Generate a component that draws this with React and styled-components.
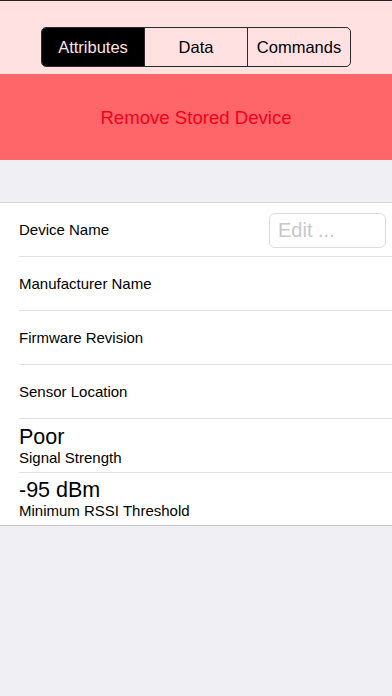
import React from "react";
import styled, { createGlobalStyle } from "styled-components";

const Global = createGlobalStyle`
  html, body { margin: 0; padding: 0; }
  body {
    background: #efeff4;
    font-family: "Liberation Sans", Arial, sans-serif;
    -webkit-font-smoothing: antialiased;
  }
  #root { min-height: 696px; }
`;

const Page = styled.div`
  width: 392px;
  min-height: 696px;
  background: #efeff4;
  display: flex;
  flex-direction: column;
`;

const Header = styled.div`
  height: 74px;
  box-sizing: border-box;
  background: #ffe1e1;
  border-top: 1px solid #222;
  display: flex;
  align-items: flex-start;
  justify-content: center;
  padding-top: 26px;
`;

const Segmented = styled.div`
  display: flex;
  width: 310px;
  height: 40px;
  box-sizing: border-box;
  border: 1px solid #2b2b2b;
  border-radius: 5px;
  overflow: hidden;
`;

const Segment = styled.div`
  flex: 1;
  display: flex;
  align-items: center;
  justify-content: center;
  padding-top: 1px;
  font-size: 16.5px;
  color: ${(p) => (p.$active ? "#ffe1e1" : "#000")};
  background: ${(p) => (p.$active ? "#000" : "transparent")};
  & + & { border-left: 1px solid #2b2b2b; }
`;

const RemoveBand = styled.div`
  height: 86px;
  background: #ff6669;
  display: flex;
  align-items: center;
  justify-content: center;
  padding-top: 1px;
  box-sizing: border-box;
  color: #f5001a;
  font-size: 18.6px;
`;

const Spacer = styled.div`
  height: 42px;
`;

const List = styled.div`
  background: #fff;
  border-top: 1px solid #d6d6da;
  border-bottom: 1px solid #c8c7cc;
`;

const Row = styled.div`
  height: 54px;
  box-sizing: border-box;
  margin-left: 19px;
  padding-right: 6px;
  display: flex;
  align-items: center;
  justify-content: space-between;
  &:not(:last-child) { border-bottom: 1px solid #e0e0e4; }
  &:last-child { height: 52px; }
`;

const Label = styled.div`
  font-size: 15px;
  color: #000;
`;

const Stack = styled.div`
  display: flex;
  flex-direction: column;
`;

const Value = styled.div`
  font-size: 21.5px;
  line-height: 24px;
  color: #000;
`;

const SubLabel = styled.div`
  font-size: 15px;
  line-height: 18px;
  color: #000;
`;

const EditField = styled.input`
  width: 117px;
  height: 35px;
  box-sizing: border-box;
  border: 1px solid #dcdcdc;
  border-radius: 6px;
  padding: 0 8px;
  font-family: inherit;
  font-size: 20px;
  color: #000;
  background: #fff;
  outline: none;
  margin-top: 1px;
  &::placeholder { color: #c7c7cd; }
`;

export default function App() {
  return (
    <Page>
      <Global />
      <Header>
        <Segmented>
          <Segment $active>Attributes</Segment>
          <Segment>Data</Segment>
          <Segment>Commands</Segment>
        </Segmented>
      </Header>
      <RemoveBand>Remove Stored Device</RemoveBand>
      <Spacer />
      <List>
        <Row>
          <Label>Device Name</Label>
          <EditField placeholder="Edit ..." />
        </Row>
        <Row>
          <Label>Manufacturer Name</Label>
        </Row>
        <Row>
          <Label>Firmware Revision</Label>
        </Row>
        <Row>
          <Label>Sensor Location</Label>
        </Row>
        <Row>
          <Stack>
            <Value>Poor</Value>
            <SubLabel>Signal Strength</SubLabel>
          </Stack>
        </Row>
        <Row>
          <Stack>
            <Value>-95 dBm</Value>
            <SubLabel>Minimum RSSI Threshold</SubLabel>
          </Stack>
        </Row>
      </List>
    </Page>
  );
}
